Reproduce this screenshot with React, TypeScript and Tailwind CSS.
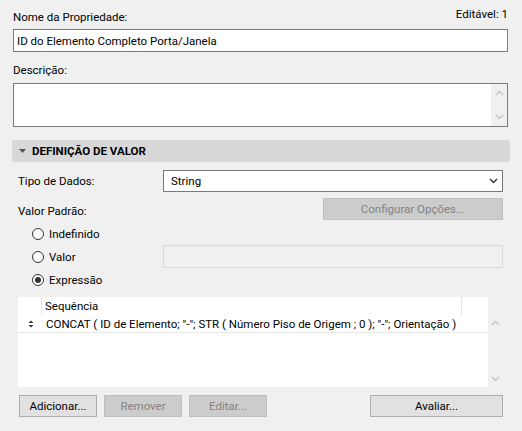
import React from 'react';

// small chevrons used by the scroll bars and the dropdown
const ChevronUp = ({ className = '' }: { className?: string }) => (
  <svg width="9" height="6" viewBox="0 0 9 6" className={className}>
    <path d="M1 5 L4.5 1.5 L8 5" fill="none" stroke="currentColor" strokeWidth="1.4" />
  </svg>
);

const ChevronDown = ({ className = '' }: { className?: string }) => (
  <svg width="9" height="6" viewBox="0 0 9 6" className={className}>
    <path d="M1 1 L4.5 4.5 L8 1" fill="none" stroke="currentColor" strokeWidth="1.4" />
  </svg>
);

const Radio = ({ checked, label }: { checked?: boolean; label: string }) => (
  <label className="flex items-center">
    <span className="w-[12px] h-[12px] rounded-full border border-[#333] bg-white flex items-center justify-center">
      {checked && <span className="w-[6px] h-[6px] rounded-full bg-[#333]" />}
    </span>
    <span className="ml-[5px]">{label}</span>
  </label>
);

const Button = ({ label, disabled, className = '' }: { label: string; disabled?: boolean; className?: string }) => (
  <button
    disabled={disabled}
    className={`h-[22px] border flex items-center justify-center ${
      disabled ? 'bg-[#cccccc] border-[#bfbfbf] text-[#838383]' : 'bg-[#e1e1e1] border-[#adadad] text-black'
    } ${className}`}
  >
    {label}
  </button>
);

// tiny up/down handle shown in front of each expression row
const DragHandle = () => (
  <svg width="6" height="8" viewBox="0 0 6 8">
    <path d="M0.5 3 L5.5 3 L3 0.5 Z" fill="#333" />
    <path d="M0.5 5 L5.5 5 L3 7.5 Z" fill="#333" />
  </svg>
);

export default function App() {
  return (
    <div className="w-[522px] h-[431px] bg-[#f0f0f0] text-[11.5px] leading-[16px] text-black font-['Roboto',sans-serif] overflow-hidden">
      <div className="flex justify-between items-start pl-[13px] pr-[14px] pt-[6px]">
        <span className="pt-[3px]">Nome da Propriedade:</span>
        <span>Editável: 1</span>
      </div>
      <div className="mt-[4px] ml-[13px] mr-[14px] h-[23px] border border-[#7a7a7a] bg-white flex items-center pl-[3px]">
        ID do Elemento Completo Porta/Janela
      </div>

      <div className="mt-[10px] pl-[13px]">Descrição:</div>
      <div className="mt-[5px] ml-[13px] mr-[14px] h-[44px] border border-[#7a7a7a] bg-white flex justify-end">
        <div className="w-[16px] bg-[#f0f0f0] flex flex-col items-center justify-between py-[6px] text-[#c4c4c4]">
          <ChevronUp />
          <ChevronDown />
        </div>
      </div>

      <div className="mt-[13px] mx-[12px] h-[22px] rounded-[3px] bg-[#d8d8d8] flex items-center pl-[7px]">
        <svg width="7" height="4" viewBox="0 0 7 4">
          <path d="M0 0 L7 0 L3.5 4 Z" fill="#555" />
        </svg>
        <span className="ml-[6px] font-bold">DEFINIÇÃO DE VALOR</span>
      </div>

      <div className="pl-[18px] pr-[19px]">
        <div className="mt-[8px] h-[22px] flex items-center">
          <span className="w-[145px]">Tipo de Dados:</span>
          <div className="flex-1 h-full border border-[#7a7a7a] bg-white flex items-center justify-between pl-[7px] pr-[4px]">
            <span>String</span>
            <ChevronDown className="text-[#333]" />
          </div>
        </div>

        <div className="mt-[6px] h-[22px] flex items-center justify-between">
          <span className="pt-[3px]">Valor Padrão:</span>
          <Button label="Configurar Opções..." disabled className="w-[180px]" />
        </div>

        <div className="mt-[2px] pl-[14px]">
          <div className="h-[23px] flex items-center">
            <Radio label="Indefinido" />
          </div>
          <div className="h-[23px] flex items-center">
            <div className="w-[131px]">
              <Radio label="Valor" />
            </div>
            <div className="flex-1 h-[23px] border border-[#d9d9d9] bg-[#f0f0f0]" />
          </div>
          <div className="h-[23px] flex items-center">
            <Radio checked label="Expressão" />
          </div>
        </div>

        <div className="mt-[6px] h-[90px] flex">
          <div className="flex-1 bg-white flex flex-col">
            <div className="h-[18px] flex">
              <div className="w-[24px] border-r border-[#e5e5e5]" />
              <div className="w-[420px] border-r border-[#e5e5e5] pl-[3px] flex items-center">Sequência</div>
              <div className="flex-1" />
            </div>
            <div className="h-[18px] flex items-center border-b border-[#e8e8e8]">
              <div className="w-[24px] flex justify-center pl-[1px]">
                <DragHandle />
              </div>
              <span className="pl-[4px] whitespace-nowrap">CONCAT ( ID de Elemento; "-"; STR ( Número Piso de Origem ; 0 ); "-"; Orientação )</span>
            </div>
          </div>
          <div className="w-[15px] mt-[18px] flex flex-col items-center justify-between py-[5px] text-[#c4c4c4]">
            <ChevronUp />
            <ChevronDown />
          </div>
        </div>

        <div className="mt-[8px] flex">
          <Button label="Adicionar..." className="ml-[1px] w-[78px]" />
          <Button label="Remover" disabled className="ml-[7px] w-[78px]" />
          <Button label="Editar..." disabled className="ml-[7px] w-[78px]" />
          <Button label="Avaliar..." className="ml-auto w-[133px]" />
        </div>
      </div>
    </div>
  );
}
